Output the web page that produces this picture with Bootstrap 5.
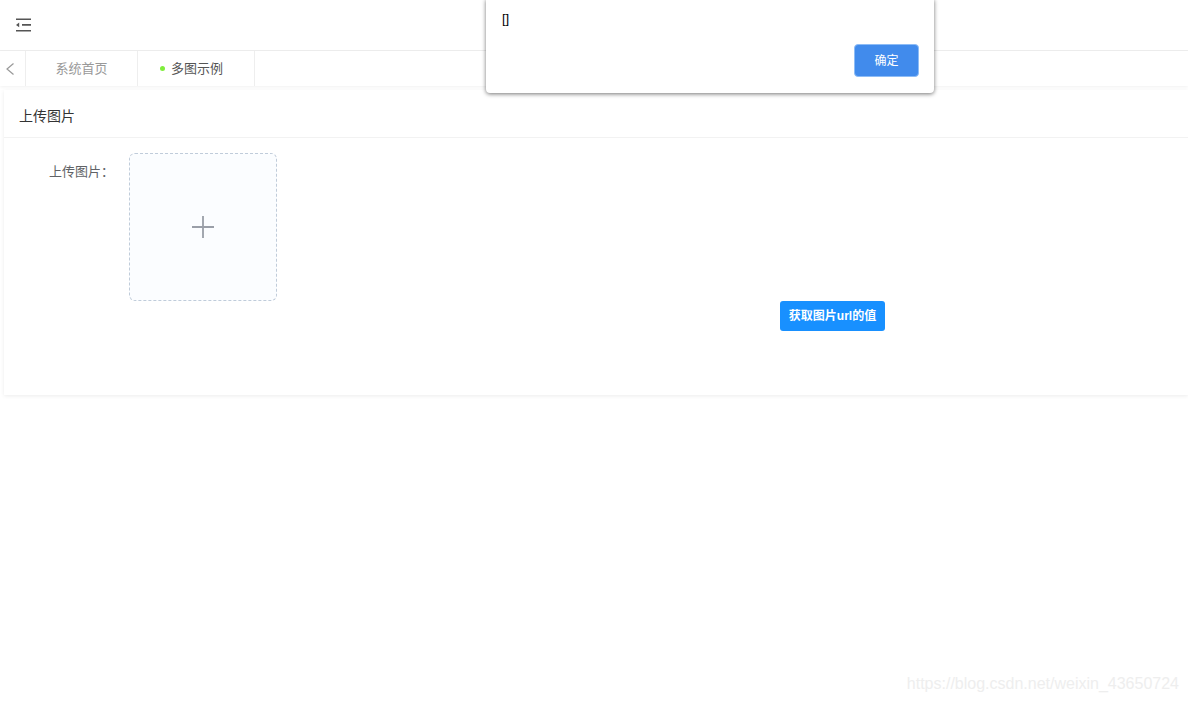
<!DOCTYPE html>
<html lang="zh-CN">
<head>
    <meta charset="UTF-8">
    <meta name="viewport" content="width=device-width, initial-scale=1.0">
    <title>多图示例</title>
    <link href="https://cdn.jsdelivr.net/npm/bootstrap@5.3.3/dist/css/bootstrap.min.css" rel="stylesheet">
    <script src="https://cdn.jsdelivr.net/npm/bootstrap@5.3.3/dist/js/bootstrap.bundle.min.js"></script>
    <style>
        html, body { height: 100%; }
        body {
            font-family: "Liberation Sans", "Noto Sans CJK SC", sans-serif;
            font-size: 13px;
            color: #303133;
            background: #fff;
            overflow: hidden;
        }
        .page-wrap { position: relative; height: 702px; }
        .top-bar { height: 51px; padding-left: 15px; border-bottom: 1px solid #eeeeee; }
        .tab-bar { height: 35px; box-shadow: 0 1px 3px rgba(0, 0, 0, .06); }
        .tab-arrow { width: 26px; padding-left: 5px; border-right: 1px solid #eeeeee; }
        .tab-item { height: 100%; border-right: 1px solid #eeeeee; color: #999999; }
        .tab-home { width: 112px; }
        .tab-active { width: 117px; padding-left: 22px; color: #555555; }
        .tab-dot { width: 5px; height: 5px; border-radius: 50%; background: #7fee3c; margin-right: 6px; }
        .panel-box {
            margin: 4px 0 0 4px;
            height: 305px;
            box-shadow: 0 1px 4px rgba(0, 0, 0, .08);
        }
        .panel-head { height: 48px; padding: 6px 0 0 15px; border-bottom: 1px solid #f2f2f2; font-size: 14px; color: #333333; }
        .panel-body { padding-top: 15px; }
        .form-name { width: 110px; text-align: right; padding-top: 10px; line-height: 18px; color: #606266; }
        .upload-box {
            width: 148px;
            height: 148px;
            margin-left: 15px;
            background: #fbfdff;
            border: 1px dashed #c0ccda;
            border-radius: 6px;
        }
        .geturl-row { padding-left: 776px; }
        .geturl-btn {
            width: 105px;
            height: 30px;
            padding: 0;
            font-size: 12px;
            font-weight: 700;
            color: #fff;
            background: #1890ff;
            border: 0;
            border-radius: 3px;
        }
        .alert-box {
            position: absolute;
            left: 486px;
            top: -1px;
            width: 448px;
            height: 94px;
            background: #fff;
            border-radius: 0 0 4px 4px;
            box-shadow: 0 1px 4px rgba(0, 0, 0, .55);
        }
        .alert-text { position: absolute; left: 16px; top: 13px; font-size: 13px; line-height: 14px; color: #000000; }
        .alert-btn {
            position: absolute;
            right: 15px;
            top: 45px;
            width: 65px;
            height: 33px;
            padding: 0;
            font-size: 12px;
            color: #fff;
            background: #418bec;
            border: 1px solid #8dbcf6;
            border-radius: 4px;
        }
        .water-mark {
            position: absolute;
            right: 9px;
            top: 674px;
            font-size: 16px;
            line-height: 20px;
            color: #eeeeee;
        }
    </style>
</head>
<body>
<div class="page-wrap">

    <!-- top bar -->
    <div class="top-bar d-flex align-items-center">
        <svg width="16" height="14" viewBox="0 0 16 14" fill="none" stroke="#555555" stroke-width="1.6">
            <path d="M1 1.2H16M7 6.9H16M1 12.8H16"/>
            <path d="M4.2 4.6V9.2L1 6.9Z" fill="#555555" stroke="none"/>
        </svg>
    </div>

    <!-- tabs -->
    <div class="tab-bar d-flex">
        <div class="tab-arrow d-flex align-items-center">
            <svg width="10" height="14" viewBox="0 0 10 14" fill="none" stroke="#999999" stroke-width="1.2">
                <path d="M8.5 1.5L2 7L8.5 12.5"/>
            </svg>
        </div>
        <div class="tab-item tab-home d-flex align-items-center justify-content-center">系统首页</div>
        <div class="tab-item tab-active d-flex align-items-center">
            <span class="tab-dot"></span>多图示例
        </div>
    </div>

    <!-- card -->
    <div class="panel-box">
        <div class="panel-head d-flex align-items-center">上传图片</div>
        <div class="panel-body">
            <div class="d-flex">
                <div class="form-name">上传图片：</div>
                <div class="upload-box d-flex align-items-center justify-content-center">
                    <svg width="22" height="22" viewBox="0 0 22 22" stroke="#9a9fa8" stroke-width="1.8">
                        <path d="M11 0V22M0 11H22"/>
                    </svg>
                </div>
            </div>
            <div class="geturl-row">
                <button type="button" class="btn geturl-btn">获取图片url的值</button>
            </div>
        </div>
    </div>

    <!-- alert -->
    <div class="alert-box">
        <div class="alert-text">[]</div>
        <button type="button" class="btn alert-btn">确定</button>
    </div>

    <div class="water-mark">https://blog.csdn.net/weixin_43650724</div>
</div>
</body>
</html>
